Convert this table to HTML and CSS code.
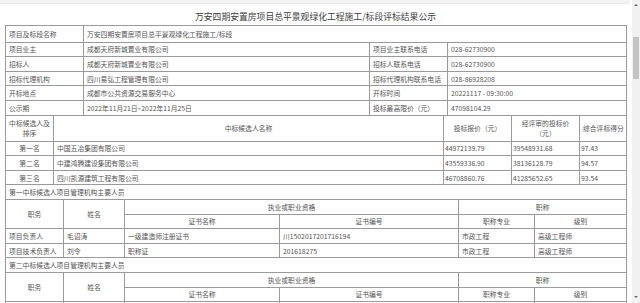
FILE: index.html
```html
<!DOCTYPE html>
<html lang="zh-CN">

<head>
    <meta charset="UTF-8">
    <meta name="viewport" content="width=device-width, initial-scale=1.0">
    <title>评标结果公示</title>
    <link rel="stylesheet" href="styles.css">
</head>

<body>
    <div class="window">
        <div class="content">
            <div class="top-band"></div>
            <h1 class="title">万安四期安置房项目总平景观绿化工程施工/标段评标结果公示</h1>

            <!-- 项目信息 -->
            <table class="grid info">
                <colgroup>
                    <col style="width: 78px">
                    <col style="width: 286px">
                    <col style="width: 78px">
                    <col style="width: 179px">
                </colgroup>
                <tr class="first">
                    <td>项目及标段名称</td>
                    <td colspan="3">万安四期安置房项目总平景观绿化工程施工/标段</td>
                </tr>
                <tr>
                    <td>项目业主</td>
                    <td>成都天府新城置业有限公司</td>
                    <td>项目业主联系电话</td>
                    <td>028-62730900</td>
                </tr>
                <tr>
                    <td>招标人</td>
                    <td>成都天府新城置业有限公司</td>
                    <td>招标人联系电话</td>
                    <td>028-62730900</td>
                </tr>
                <tr>
                    <td>招标代理机构</td>
                    <td>四川易弘工程管理有限公司</td>
                    <td>招标代理机构联系电话</td>
                    <td>028-86928208</td>
                </tr>
                <tr>
                    <td>开标地点</td>
                    <td>成都市公共资源交易服务中心</td>
                    <td>开标时间</td>
                    <td>20221117 - 09:30:00</td>
                </tr>
                <tr>
                    <td>公示期</td>
                    <td>2022年11月21日~2022年11月25日</td>
                    <td>投标最高限价（元）</td>
                    <td>47098104.29</td>
                </tr>
            </table>

            <!-- 中标候选人 -->
            <table class="grid cands">
                <colgroup>
                    <col style="width: 48px">
                    <col style="width: 390px">
                    <col style="width: 68px">
                    <col style="width: 68px">
                    <col style="width: 47px">
                </colgroup>
                <tr class="head">
                    <td class="center">中标候选人及<br>排序</td>
                    <td class="center">中标候选人名称</td>
                    <td class="center">投标报价（元）</td>
                    <td class="center">经评审的投标价<br>（元）</td>
                    <td class="center">综合评标得分</td>
                </tr>
                <tr>
                    <td class="center">第一名</td>
                    <td>中国五冶集团有限公司</td>
                    <td class="num">44972139.79</td>
                    <td class="num">39548931.68</td>
                    <td class="num">97.43</td>
                </tr>
                <tr>
                    <td class="center">第二名</td>
                    <td>中建鸿腾建设集团有限公司</td>
                    <td class="num">43559336.90</td>
                    <td class="num">38136128.79</td>
                    <td class="num">94.57</td>
                </tr>
                <tr>
                    <td class="center">第三名</td>
                    <td>四川凯源建筑工程有限公司</td>
                    <td class="num">46708860.76</td>
                    <td class="num">41285652.65</td>
                    <td class="num">93.54</td>
                </tr>
            </table>

            <!-- 项目管理机构主要人员 -->
            <table class="grid staff">
                <colgroup>
                    <col style="width: 58px">
                    <col style="width: 61px">
                    <col style="width: 155px">
                    <col style="width: 179px">
                    <col style="width: 76px">
                    <col style="width: 92px">
                </colgroup>
                <tr>
                    <td colspan="6">第一中标候选人项目管理机构主要人员</td>
                </tr>
                <tr>
                    <td class="center" rowspan="2">职务</td>
                    <td class="center" rowspan="2">姓名</td>
                    <td class="center" colspan="2">执业或职业资格</td>
                    <td class="center" colspan="2">职称</td>
                </tr>
                <tr>
                    <td class="center">证书名称</td>
                    <td class="center">证书编号</td>
                    <td class="center">职称专业</td>
                    <td class="center">级别</td>
                </tr>
                <tr>
                    <td>项目负责人</td>
                    <td>毛诏涛</td>
                    <td>一级建造师注册证书</td>
                    <td>川1502017201716194</td>
                    <td>市政工程</td>
                    <td>高级工程师</td>
                </tr>
                <tr>
                    <td>项目技术负责人</td>
                    <td>刘令</td>
                    <td>职称证</td>
                    <td>201618275</td>
                    <td>市政工程</td>
                    <td>高级工程师</td>
                </tr>
                <tr>
                    <td colspan="6">第二中标候选人项目管理机构主要人员</td>
                </tr>
                <tr>
                    <td class="center" rowspan="2">职务</td>
                    <td class="center" rowspan="2">姓名</td>
                    <td class="center" colspan="2">执业或职业资格</td>
                    <td class="center" colspan="2">职称</td>
                </tr>
                <tr>
                    <td class="center">证书名称</td>
                    <td class="center">证书编号</td>
                    <td class="center">职称专业</td>
                    <td class="center">级别</td>
                </tr>
                <tr>
                    <td></td>
                    <td></td>
                    <td></td>
                    <td></td>
                    <td></td>
                    <td></td>
                </tr>
            </table>
        </div>

        <div class="scrollbar">
            <span class="arrow up"></span>
            <span class="thumb"></span>
            <span class="track"></span>
            <span class="arrow down"></span>
        </div>
    </div>
</body>

</html>
```

FILE: styles.css
```css
* {
    box-sizing: border-box;
    margin: 0;
    padding: 0;
}

body {
    background: #fff;
    font-family: "Noto Sans CJK SC", "Noto Sans", sans-serif;
    color: #555;
}

.window {
    display: flex;
    width: 640px;
    height: 303px;
    overflow: hidden;
}

.content {
    width: 632px;
    padding-left: 5px;
}

.top-band {
    height: 4px;
    margin-left: -5px;
    width: 630px;
    background: #f3f3f3;
    border-bottom: 1px solid #ececec;
}

.title {
    width: 621px;
    height: 21px;
    line-height: 26px;
    text-align: center;
    font-size: 8.8px;
    font-weight: normal;
    color: #3e3e3e;
}

.grid {
    width: 621px;
    table-layout: fixed;
    border-collapse: collapse;
    font-size: 6.8px;
}

.grid + .grid {
    margin-top: -1px;
}

.grid td {
    border: 1px solid #9a9a9a;
    padding: 0 3px;
    height: 14.6px;
    line-height: 12px;
    white-space: nowrap;
    overflow: hidden;
}

.info tr.first td {
    height: 16.6px;
}

.grid td.center {
    text-align: center;
}

.grid td.num {
    padding-left: 1px;
}

.cands tr.head td {
    height: 26px;
    line-height: 10px;
}

.scrollbar {
    width: 8px;
    height: 303px;
    display: flex;
    flex-direction: column;
    align-items: center;
    background: #f1f1f1;
}

.arrow {
    width: 0;
    height: 0;
    border-left: 2px solid transparent;
    border-right: 2px solid transparent;
}

.arrow.up {
    margin-top: 4px;
    border-bottom: 2px solid #6a6a6a;
}

.arrow.down {
    margin-bottom: 5px;
    border-top: 2px solid #6a6a6a;
}

.thumb {
    width: 6px;
    height: 42px;
    margin-top: 31px;
    background: #c4c4c4;
}

.track {
    flex: 1;
}
```
